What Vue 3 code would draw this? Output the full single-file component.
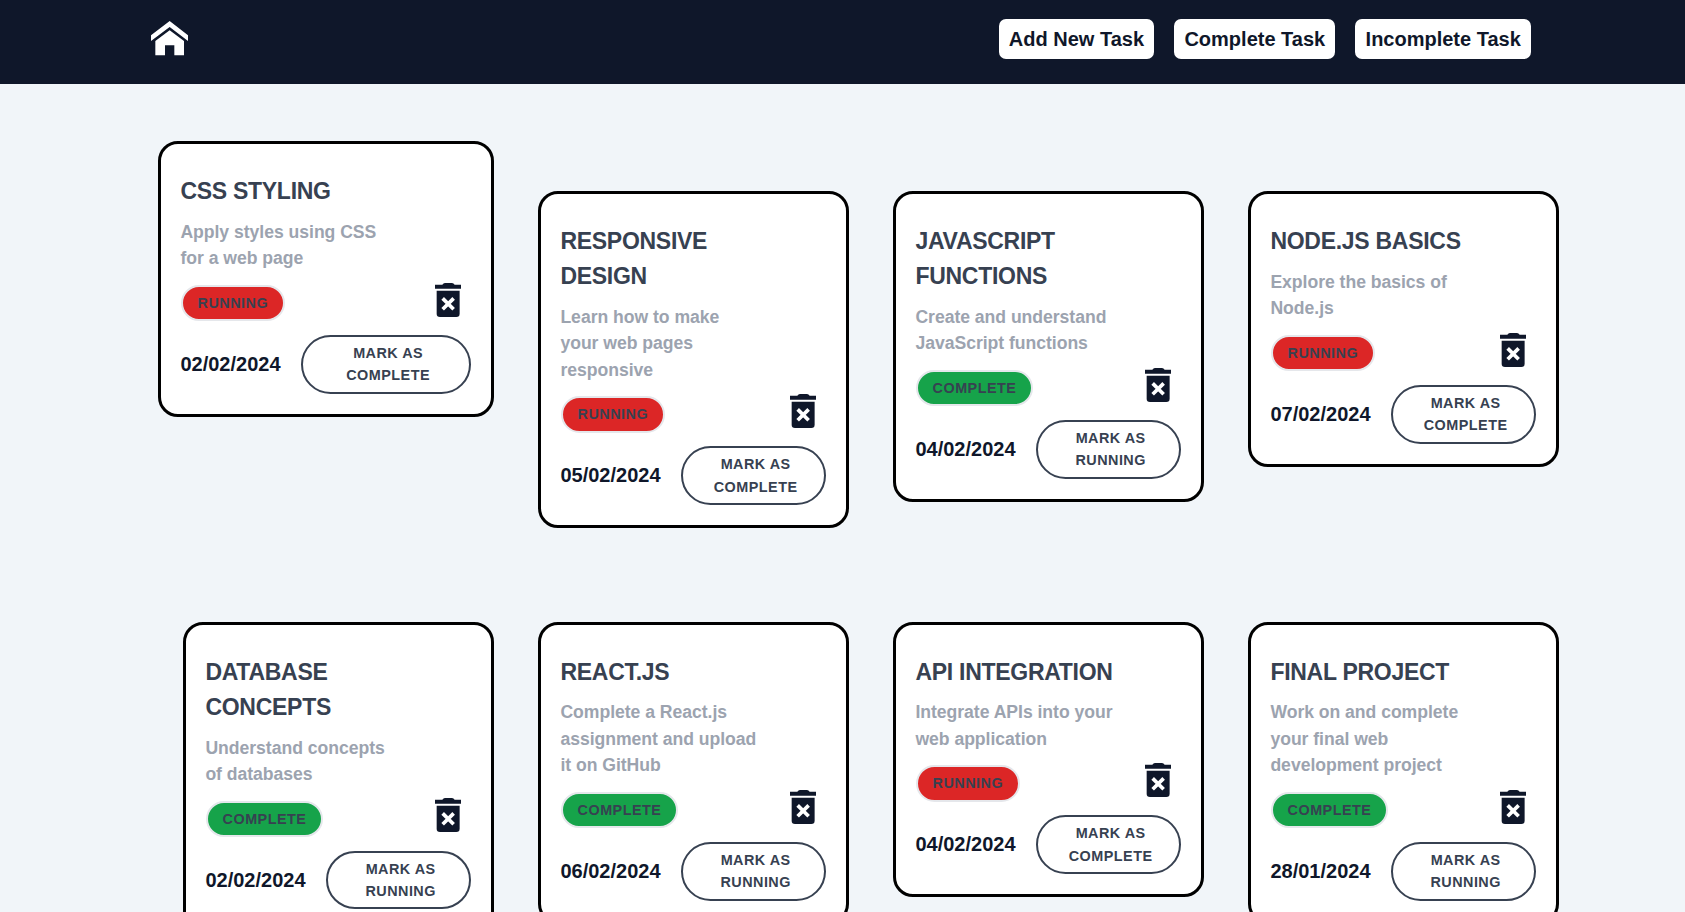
<script setup>
const tasks = [
  { title: 'CSS Styling', text: 'Apply styles using CSS\nfor a web page', done: false, date: '02/02/2024' },
  { title: 'Responsive\nDesign', text: 'Learn how to make\nyour web pages\nresponsive', done: false, date: '05/02/2024' },
  { title: 'JavaScript\nFunctions', text: 'Create and understand\nJavaScript functions', done: true, date: '04/02/2024' },
  { title: 'Node.js Basics', text: 'Explore the basics of\nNode.js', done: false, date: '07/02/2024' },
  { title: 'Database\nConcepts', text: 'Understand concepts\nof databases', done: true, date: '02/02/2024' },
  { title: 'React.js', text: 'Complete a React.js\nassignment and upload\nit on GitHub', done: true, date: '06/02/2024' },
  { title: 'API Integration', text: 'Integrate APIs into your\nweb application', done: false, date: '04/02/2024' },
  { title: 'Final Project', text: 'Work on and complete\nyour final web\ndevelopment project', done: true, date: '28/01/2024' },
]
const links = ['Add New Task', 'Complete Task', 'Incomplete Task']
</script>

<template>
  <div class="page">
    <header class="nav">
      <svg class="home" viewBox="63 64 111 103" preserveAspectRatio="none">
        <path d="M119 64L174 107V124L119 82L63 124V107Z" />
        <path d="M119 92L162 124V167H133V137H105V167H76V124Z" />
      </svg>
      <nav class="links">
        <button v-for="l in links" :key="l" class="link">{{ l }}</button>
      </nav>
    </header>
    <main class="grid">
      <article v-for="t in tasks" :key="t.title" class="card">
        <h2 class="title">{{ t.title }}</h2>
        <p class="text">{{ t.text }}</p>
        <div class="row status">
          <span class="badge" :class="t.done ? 'done' : 'running'">{{ t.done ? 'Complete' : 'Running' }}</span>
          <svg class="trash" viewBox="0 0 79 102">
            <path d="M0 5H22Q25 0 30 0H51Q56 0 59 5H79V17H0Z" />
            <path d="M5 23H74V92Q74 102 64 102H15Q5 102 5 92Z" />
            <path class="cross" d="M23 46L56 79M56 46L23 79" />
          </svg>
        </div>
        <div class="row">
          <span class="date">{{ t.date }}</span>
          <button class="mark">Mark as<br>{{ t.done ? 'Running' : 'Complete' }}</button>
        </div>
      </article>
    </main>
  </div>
</template>

<style>
body {
  background: #f1f5f9;
  overflow: hidden;
}
</style>

<style scoped>
.page {
  height: 912px;
  overflow: hidden;
  font-family: "Liberation Sans", Arial, sans-serif;
  font-weight: 700;
  color: #0f172a;
  background: #f1f5f9;
}
.nav {
  box-sizing: border-box;
  height: 84px;
  padding: 19px 154px 0 151px;
  display: flex;
  justify-content: space-between;
  align-items: flex-start;
  background: #0f172a;
}
.home {
  width: 37px;
  height: 34.3px;
  margin-top: 2.3px;
  fill: #fff;
}
.links {
  display: flex;
  gap: 20px;
}
.link {
  height: 40px;
  padding: 0 10.2px;
  border: 0;
  border-radius: 7px;
  background: #fff;
  color: #0f172a;
  font: inherit;
  font-size: 20px;
}
.grid {
  display: grid;
  grid-template-columns: repeat(4, 311px);
  column-gap: 44px;
  row-gap: 93.6px;
  align-items: start;
  padding: 107px 0 0 183px;
}
.card {
  box-sizing: border-box;
  padding: 29.8px 20px 20px;
  border: 3px solid #000;
  border-radius: 20px;
  background: #fff;
}
.card:first-child {
  margin: -50px 0 0 -25px;
}
.title,
.text {
  margin: 0 0 0 -0.6px;
  white-space: pre;
}
.title {
  font-size: 23px;
  line-height: 35.2px;
  letter-spacing: -0.28px;
  text-transform: uppercase;
  color: #374151;
}
.text {
  margin-top: 9.7px;
  font-size: 17.6px;
  line-height: 26.4px;
  letter-spacing: -0.03px;
  color: #9ca3af;
}
.row {
  display: flex;
  align-items: center;
  gap: 20px;
}
.status {
  align-items: flex-start;
  justify-content: space-between;
  margin: 13.2px 0 13.6px;
}
.badge,
.mark {
  box-sizing: border-box;
  padding: 5px 14.6px;
  border: 2px solid #e5e7eb;
  border-radius: 30px;
  font-size: 14.4px;
  line-height: 22.4px;
  letter-spacing: 0.48px;
  text-transform: uppercase;
  color: #374151;
}
.badge.running {
  background: #dc2626;
}
.badge.done {
  background: #16a34a;
}
.trash {
  width: 26.3px;
  height: 34px;
  margin: -2.2px 9.6px 0 0;
  fill: #0f172a;
}
.cross {
  fill: none;
  stroke: #fff;
  stroke-width: 11;
}
.date {
  margin: 0 0.6px 0 -0.6px;
  font-size: 20px;
}
.mark {
  flex: 1;
  padding-left: 18.8px;
  border-color: #374151;
  background: #fff;
  font-family: inherit;
  font-weight: inherit;
}
</style>
